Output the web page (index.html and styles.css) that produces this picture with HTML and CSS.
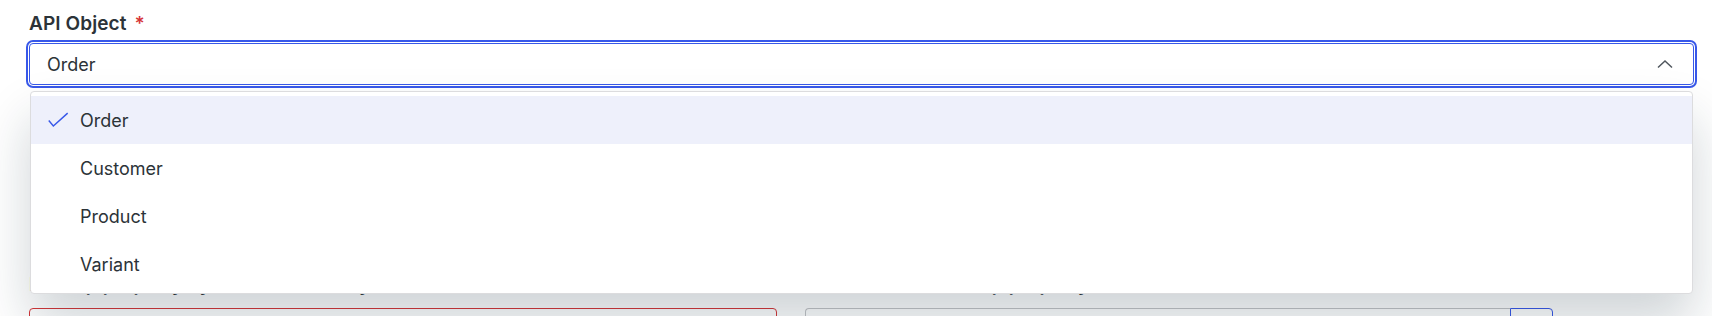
FILE: index.html
```html
<!DOCTYPE html>
<html lang="en">
<head>
<meta charset="utf-8">
<title>API Object</title>
<link rel="stylesheet" href="styles.css">
</head>
<body>
<form class="form">
  <div class="field field-api">
    <label class="label">API Object <span class="req">*</span></label>
    <div class="select-wrap">
      <div class="select">
        <span class="select-value">Order</span>
        <svg class="chevron" width="16" height="10" viewBox="0 0 16 10"><polyline points="1,8.5 8,2 15,8.5" fill="none" stroke="#50575e" stroke-width="1.5"/></svg>
      </div>
      <ul class="menu">
        <li class="option selected">
          <span class="check"><svg width="22" height="16" viewBox="0 0 22 16"><polyline points="0.8,8.6 5.6,14.2 20.6,0.8" fill="none" stroke="#3858e9" stroke-width="1.5"/></svg></span>
          <span>Order</span>
        </li>
        <li class="option"><span class="check"></span><span>Customer</span></li>
        <li class="option"><span class="check"></span><span>Product</span></li>
        <li class="option"><span class="check"></span><span>Variant</span></li>
      </ul>
    </div>
  </div>

  <div class="row">
    <div class="field">
      <label class="label">Lookup property by which to identify</label>
      <div class="input input-error"></div>
    </div>
    <div class="field">
      <label class="label label-right">Value of the lookup property to match <span class="help"></span></label>
      <div class="input-group">
        <div class="input input-plain"></div>
        <button type="button" class="input-btn"></button>
      </div>
    </div>
  </div>
</form>
</body>
</html>
```

FILE: styles.css
```css
* { box-sizing: border-box; }

html, body {
  margin: 0;
  background: #ffffff;
  overflow: hidden;
}

body {
  font-family: Inter, "Noto Sans", "Liberation Sans", sans-serif;
  color: #2c3338;
  width: 1712px;
  height: 316px;
}

.form {
  height: 316px;
  overflow: hidden;
  padding: 13px 18px 0 29px;
}

.field {
  display: flex;
  flex-direction: column;
}

.label {
  display: flex;
  align-items: center;
  gap: 8px;
  font-size: 19px;
  line-height: 22px;
  font-weight: 600;
  letter-spacing: 0.1px;
  color: #2c3338;
  margin-bottom: 8px;
}

.req {
  color: #d63638;
  font-weight: 600;
}

.select-wrap {
  position: relative;
  z-index: 2;
}

.select {
  height: 42px;
  display: flex;
  align-items: center;
  justify-content: space-between;
  padding: 0 20px 0 17px;
  border: 1px solid #3858e9;
  border-radius: 4px;
  box-shadow: 0 0 0 1px #ffffff, 0 0 0 3px #3858e9;
  font-size: 18px;
  color: #2c3338;
  background: #fff;
}

.chevron { display: block; }

.menu {
  position: absolute;
  top: calc(100% + 6px);
  left: 1px;
  right: 1px;
  margin: 0;
  padding: 4px 0 5px;
  list-style: none;
  background: #fff;
  border: 1px solid #dcdcde;
  border-radius: 4px;
  box-shadow: 0 28px 52px rgba(16, 38, 56, 0.2);
}

.option {
  height: 48px;
  display: flex;
  align-items: center;
  gap: 11px;
  padding-left: 17px;
  font-size: 18px;
  color: #2c3338;
}

.option.selected {
  background: #eef0fb;
}

.check {
  width: 21px;
  height: 16px;
  display: flex;
  align-items: center;
}

.check svg { display: block; }

.row {
  margin-top: 189px;
  display: grid;
  grid-template-columns: 748px 748px;
  column-gap: 28px;
}

.row .label {
  margin-bottom: 12px;
}

.label-right {
  padding-left: 20px;
}

.help {
  width: 15px;
  height: 15px;
  border-radius: 50%;
  background: #a7aaad;
}

.input {
  height: 42px;
  border-radius: 4px;
  background: #fff;
}

.input-error {
  border: 1px solid #d63638;
}

.input-group {
  display: flex;
}

.input-plain {
  flex: 1;
  border: 1px solid #c3c4c7;
  border-right: 0;
  border-radius: 4px 0 0 4px;
}

.input-btn {
  width: 43px;
  height: 42px;
  border: 1px solid #3858e9;
  border-radius: 0 4px 4px 0;
  background: #fff;
  padding: 0;
}
```
